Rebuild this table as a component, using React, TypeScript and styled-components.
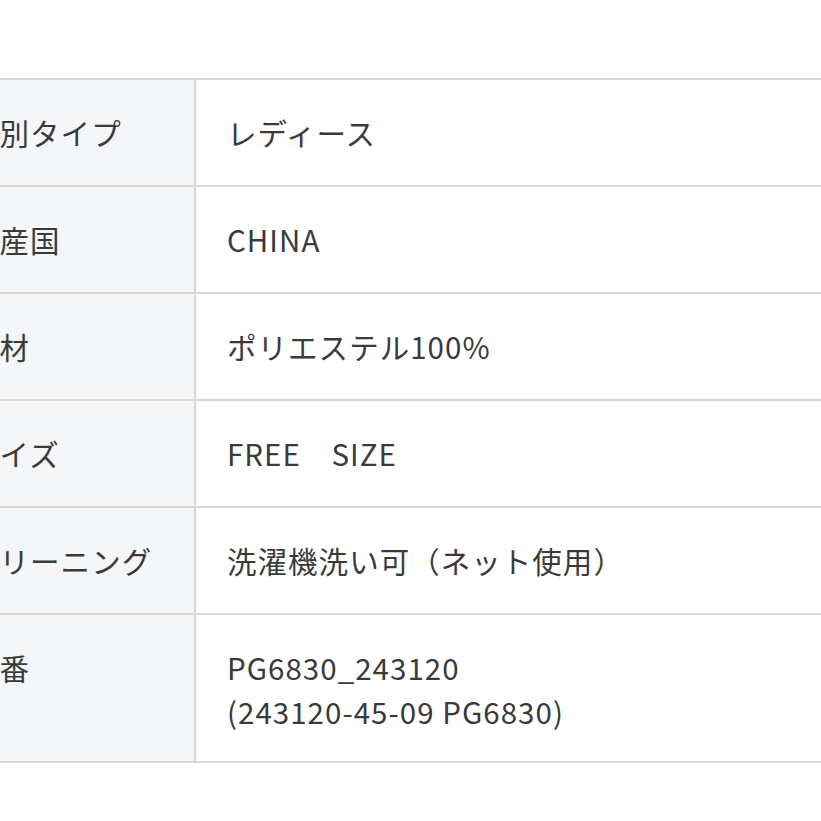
import React from "react";
import styled, { createGlobalStyle } from "styled-components";

const Global = createGlobalStyle`
  html, body { margin: 0; padding: 0; background: #ffffff; overflow: hidden; }
  body { font-family: "Noto Sans CJK JP", "Noto Sans", sans-serif; color: #3a3a3a; }
`;

const Page = styled.div`
  width: 821px;
  height: 821px;
  overflow: hidden;
  padding-top: 78px;
  box-sizing: border-box;
`;

const Table = styled.div`
  display: grid;
  grid-template-columns: 259px 1fr;
  width: 1000px;
  margin-left: -63px;
  border-top: 2px solid #d8d8d8;
`;

const Cell = styled.div<{ $label?: boolean }>`
  box-sizing: border-box;
  min-height: 107px;
  display: flex;
  flex-direction: column;
  justify-content: flex-start;
  padding: 30px 31px 28px ${(p) => (p.$label ? "32px" : "31px")};
  border-bottom: 2px solid #d8d8d8;
  background: ${(p) => (p.$label ? "#f5f6f8" : "#ffffff")};
  border-right: ${(p) => (p.$label ? "2px solid #d8d8d8" : "none")};
  font-size: 29.5px;
  line-height: 44px;
  letter-spacing: 0.035em;
  color: #3a3a3a;
  white-space: nowrap;
`;

const rows: { label: string; value: string[] }[] = [
  { label: "性別タイプ", value: ["レディース"] },
  { label: "原産国", value: ["CHINA"] },
  { label: "素材", value: ["ポリエステル100%"] },
  { label: "サイズ", value: ["FREE\u3000SIZE"] },
  { label: "クリーニング", value: ["洗濯機洗い可（ネット使用）"] },
  { label: "品番", value: ["PG6830_243120", "(243120-45-09 PG6830)"] },
];

export default function App() {
  return (
    <Page>
      <Global />
      <Table>
        {rows.map((r) => (
          <React.Fragment key={r.label}>
            <Cell $label>{r.label}</Cell>
            <Cell>
              {r.value.map((v) => (
                <span key={v}>{v}</span>
              ))}
            </Cell>
          </React.Fragment>
        ))}
      </Table>
    </Page>
  );
}
